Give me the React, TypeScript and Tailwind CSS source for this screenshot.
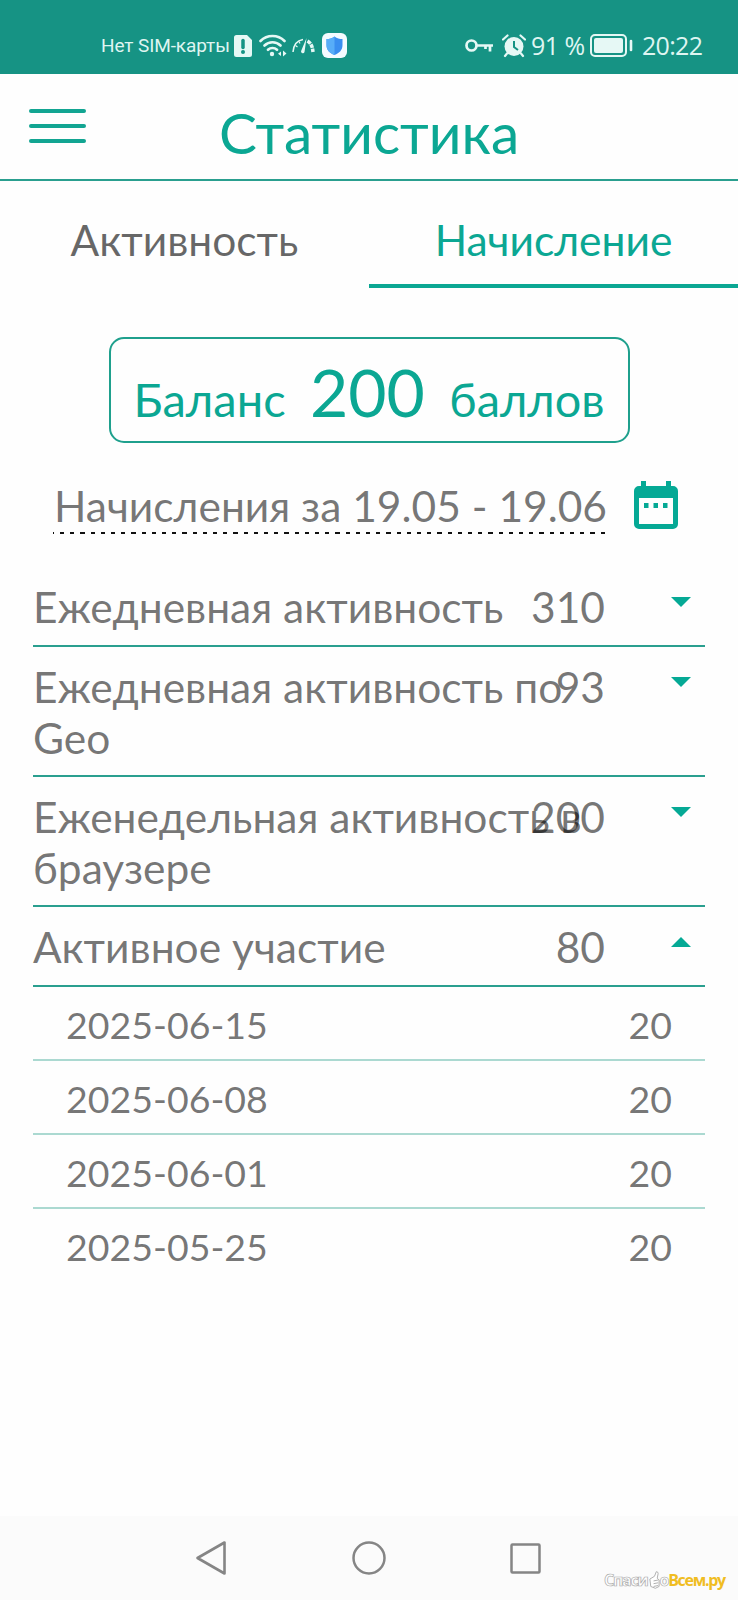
const groups = [
  { title: "Ежедневная активность", value: 310, open: false, height: "h-[80px]" },
  { title: "Ежедневная активность по Geo", value: 93, open: false, height: "h-[130px]" },
  { title: "Еженедельная активность в браузере", value: 200, open: false, height: "h-[130px]" },
  { title: "Активное участие", value: 80, open: true, height: "h-[80px]" },
];

const days = [
  { date: "2025-06-15", value: 20 },
  { date: "2025-06-08", value: 20 },
  { date: "2025-06-01", value: 20 },
  { date: "2025-05-25", value: 20 },
];

function StatusBar() {
  return (
    <div className="flex h-[74px] items-center bg-[#169384] pt-[17px] font-['Roboto',sans-serif] text-[#dff5f1]">
      <span className="ml-[101px] w-[128px] whitespace-nowrap text-[19px] leading-none tracking-[-0.1px]">Нет SIM-карты</span>
      <svg className="ml-[5px] shrink-0" width="18" height="22" viewBox="0 0 18 22">
        <path d="M2.500 0H13l5 5v14.500a2.500 2.500 0 0 1-2.500 2.500h-13A2.500 2.500 0 0 1 0 19.500v-17A2.500 2.500 0 0 1 2.500 0Z" fill="#e6f8f5" />
        <path d="M9 5.500v7" stroke="#169384" strokeWidth="3.500" strokeLinecap="round" />
        <circle cx="9" cy="17" r="2" fill="#169384" />
      </svg>
      <svg className="ml-[7px] shrink-0" width="28" height="23" viewBox="0 0 28 23" fill="none" stroke="#e6f8f5">
        <path d="M1.500 7a17 17 0 0 1 24 0M5.500 11.500a11.500 11.500 0 0 1 16 0M9 15.800a6.500 6.500 0 0 1 9 0" strokeWidth="2.600" strokeLinecap="round" />
        <circle cx="13" cy="20" r="2.200" fill="#e6f8f5" stroke="none" />
        <path d="M22 17.500v4.500l-3-2.200ZM24 16.500v6l3.500-3Z" fill="#e6f8f5" stroke="none" />
      </svg>
      <svg className="ml-[5px] shrink-0" width="24" height="20" viewBox="0 0 24 20" fill="none" stroke="#e6f8f5">
        <path d="M1 16C1.500 9 5 4.500 11 3.500" strokeWidth="1.500" />
        <path d="M15.500 5c3.500 2 5 5.500 5.500 11" strokeWidth="3.500" strokeDasharray="4 0.800" />
        <path d="m3.500 9.500 2 1.500M7 5.500l1 2" strokeWidth="1.200" />
        <path d="m14.500 2-2 14a1.800 1.800 0 0 1-3.500-.7Z" fill="#e6f8f5" stroke="none" />
      </svg>
      <svg className="ml-[6px] shrink-0" width="25" height="25" viewBox="0 0 25 25">
        <rect width="25" height="25" rx="6" fill="#f4fbff" />
        <path d="M12.500 3.500c2.500 2 5 2.500 8 2.500v6c0 5-3 8-8 10-5-2-8-5-8-10V6c3 0 5.500-.5 8-2.500Z" fill="#3a8ef0" />
        <path d="M12.500 3.500c-2.500 2-5 2.500-8 2.500v6c0 5 3 8 8 10Z" fill="#58adf8" />
      </svg>

      <svg className="ml-[118px] shrink-0" width="28" height="15" viewBox="0 0 28 15" fill="none" stroke="#e6f8f5" strokeWidth="2.700">
        <circle cx="6.500" cy="7.500" r="5" />
        <path d="M11.500 7.500H28M25 7.500v6M20.500 7.500v3.500" />
      </svg>
      <svg className="ml-[9px] shrink-0" width="24" height="24" viewBox="0 0 24 24">
        <circle cx="12" cy="12.500" r="9.500" fill="#e6f8f5" />
        <path d="M1 5.500 5.500 1.500M23 5.500 18.500 1.500M5 19.500l-2 2.500M19 19.500l2 2.500" stroke="#e6f8f5" strokeWidth="2.200" strokeLinecap="round" />
        <path d="M12 7v6l4 3" fill="none" stroke="#169384" strokeWidth="2" />
      </svg>
      <span className="ml-[5px] w-[53px] whitespace-nowrap font-['Open_Sans',sans-serif] text-[25px] leading-none tracking-[-0.5px]">91 %</span>
      <svg className="ml-[6px] shrink-0" width="43" height="23" viewBox="0 0 43 23">
        <rect x="1" y="1" width="35" height="21" rx="4" fill="none" stroke="#e6f8f5" strokeWidth="2" />
        <rect x="4" y="4" width="29" height="15" rx="2" fill="#e6f8f5" />
        <path d="M41 7v9" stroke="#e6f8f5" strokeWidth="2.600" strokeLinecap="round" />
      </svg>
      <span className="ml-[9px] whitespace-nowrap font-['Open_Sans',sans-serif] text-[25px] leading-none tracking-[-0.7px]">20:22</span>
    </div>
  );
}

function Header() {
  return (
    <header className="relative h-[107px] border-b-2 border-[#2a9f8f]">
      <div className="absolute left-[29px] top-[35px] flex flex-col gap-[11px]">
        <div className="h-[4px] w-[57px] rounded-full bg-[#12a592]" />
        <div className="h-[4px] w-[57px] rounded-full bg-[#12a592]" />
        <div className="h-[4px] w-[57px] rounded-full bg-[#12a592]" />
      </div>
      <h1 className="pt-[25px] text-center text-[56.8px] leading-[67px] text-[#0ba793]">Статистика</h1>
    </header>
  );
}

function CalendarIcon() {
  return (
    <svg className="ml-[27px] mt-[12px] shrink-0" width="44" height="49" viewBox="0 0 44 49">
      <path d="M7 0h5v5h20V0h5v5h2a5 5 0 0 1 5 5v33a5 5 0 0 1-5 5H5a5 5 0 0 1-5-5V10a5 5 0 0 1 5-5h2ZM5 17v26h34V17Z" fill="#05a995" fillRule="evenodd" />
      <path d="M10 22h4.500v5H10ZM19.500 22H24v5h-4.500ZM29 22h4.500v5H29Z" fill="#05a995" />
    </svg>
  );
}

export default function App() {
  return (
    <div className="flex h-[1600px] w-[738px] flex-col overflow-hidden bg-[#fefefe] font-['Lato',sans-serif]">
      <StatusBar />
      <Header />

      <div className="grid h-[107px] grid-cols-2 text-center text-[42.5px] leading-[50px]">
        <div className="pt-[34px] text-black/60">Активность</div>
        <div className="border-b-[4px] border-[#0ba793] pt-[34px] text-[#0ba793]">Начисление</div>
      </div>

      <div className="mx-auto mt-[49px] flex h-[106px] w-[521px] shrink-0 items-baseline justify-between rounded-[15px] border-2 border-[#1fa08d] px-[23px] pt-[13px] text-[#0ba793]">
        <span className="text-[47px]">Баланс</span>
        <span className="text-[66px] leading-[80px]">200</span>
        <span className="text-[46.8px]">баллов</span>
      </div>

      <div className="ml-[53px] mt-[26px] flex h-[98px] shrink-0">
        <div className="w-[554px]">
          <div className="whitespace-nowrap pt-[12px] pl-px text-[42.5px] leading-[50px] text-black/55">Начисления за 19.05 - 19.06</div>
          <div className="mt-px h-[2px] bg-[repeating-linear-gradient(90deg,#111_0_1px,transparent_1px_7px,#111_7px_10.2px)]" />
        </div>
        <CalendarIcon />
      </div>

      <div className="mx-[33px]">
        {groups.map((g) => (
          <div key={g.title} className={`relative border-b-2 border-[#2a9f8f] pt-[15px] text-[42.5px] leading-[50.6px] text-black/55 ${g.height}`}>
            <div className="w-[560px]">{g.title}</div>
            {/* the value sits over the end of a long title */}
            <div className="absolute right-[100px] top-[15px]">{g.value}</div>
            <svg className="absolute right-[14px] top-[30px]" width="20" height="10" viewBox="0 0 20 10">
              <path d={g.open ? "M0 10 10 0l10 10Z" : "M0 0h20L10 10Z"} fill="#05a995" />
            </svg>
          </div>
        ))}
        {days.map((d) => (
          <div key={d.date} className="flex h-[74px] justify-between border-b-2 border-[#abd9d1] px-[33px] pt-[15px] text-[37.5px] leading-[46px] text-black/55 last:border-b-0">
            <span>{d.date}</span>
            <span>{d.value}</span>
          </div>
        ))}
      </div>

      <nav className="relative mt-auto h-[84px] shrink-0 bg-[#fbfbfb]">
        <div className="flex h-full items-center gap-[124px] pl-[195px]">
          <svg width="33" height="36" viewBox="0 0 33 36" fill="none" stroke="#858585" strokeWidth="2.600">
            <path d="M29.500 2.500v31L2.500 18Z" strokeLinejoin="round" />
          </svg>
          <svg width="34" height="34" viewBox="0 0 34 34" fill="none" stroke="#858585" strokeWidth="2.500">
            <circle cx="17" cy="17" r="15.500" />
          </svg>
          <svg width="31" height="31" viewBox="0 0 31 31" fill="none" stroke="#858585" strokeWidth="2.500">
            <rect x="1.500" y="1.500" width="28" height="28" rx="1" />
          </svg>
        </div>
        <div className="absolute bottom-[10px] left-[604px] flex items-center whitespace-nowrap font-['Open_Sans',sans-serif] text-[16px] font-bold leading-[20px] tracking-[-1.3px]">
          <span className="text-white [-webkit-text-stroke:0.7px_#aaa]">Спаси</span>
          <svg width="12" height="20" viewBox="0 0 13 20" fill="#fff" stroke="#aaa" strokeWidth="1">
            <path d="M2 9 7 6l2-5q2 0 2 2l-1 5 2 2v7l-4 2-5-2Z" />
            <path d="m6 11 5-1M6 14l5-1M6 17l5-1" />
          </svg>
          <span className="text-white [-webkit-text-stroke:0.7px_#aaa]">о</span>
          <span className="text-[#f0bd22]">Всем.ру</span>
        </div>
      </nav>
    </div>
  );
}
